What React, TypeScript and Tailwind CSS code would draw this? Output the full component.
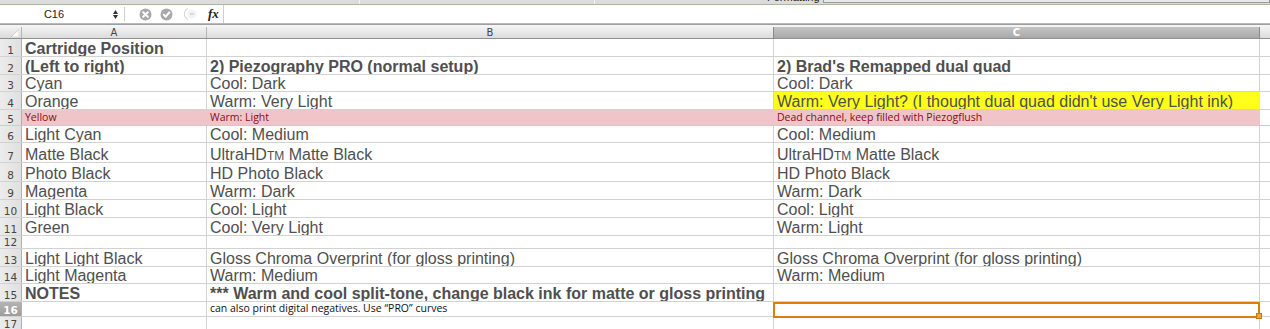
import React from "react";

type Cell = { t?: React.ReactNode; bold?: boolean; small?: "pink" | "black"; yellow?: boolean };
type Row = { n: number; h: number; cells: [Cell, Cell, Cell]; pink?: boolean };

const TM = (label: string) => (
  <span>
    UltraHD<span className="text-[12px] leading-[0px]">TM</span> {label}
  </span>
);

const rows: Row[] = [
  { n: 1, h: 18, cells: [{ t: "Cartridge Position", bold: true }, {}, {}] },
  { n: 2, h: 18, cells: [{ t: "(Left to right)", bold: true }, { t: "2) Piezography PRO (normal setup)", bold: true }, { t: "2) Brad's Remapped dual quad", bold: true }] },
  { n: 3, h: 17, cells: [{ t: "Cyan" }, { t: "Cool: Dark" }, { t: "Cool: Dark" }] },
  { n: 4, h: 18, cells: [{ t: "Orange" }, { t: "Warm: Very Light" }, { t: "Warm: Very Light? (I thought dual quad didn't use Very Light ink)", yellow: true }] },
  { n: 5, h: 16, pink: true, cells: [{ t: "Yellow", small: "pink" }, { t: "Warm: Light", small: "pink" }, { t: "Dead channel, keep filled with Piezogflush", small: "pink" }] },
  { n: 6, h: 17, cells: [{ t: "Light Cyan" }, { t: "Cool: Medium" }, { t: "Cool: Medium" }] },
  { n: 7, h: 20, cells: [{ t: "Matte Black" }, { t: TM("Matte Black") }, { t: TM("Matte Black") }] },
  { n: 8, h: 19, cells: [{ t: "Photo Black" }, { t: "HD Photo Black" }, { t: "HD Photo Black" }] },
  { n: 9, h: 18, cells: [{ t: "Magenta" }, { t: "Warm: Dark" }, { t: "Warm: Dark" }] },
  { n: 10, h: 18, cells: [{ t: "Light Black" }, { t: "Cool: Light" }, { t: "Cool: Light" }] },
  { n: 11, h: 18, cells: [{ t: "Green" }, { t: "Cool: Very Light" }, { t: "Warm: Light" }] },
  { n: 12, h: 13, cells: [{}, {}, {}] },
  { n: 13, h: 18, cells: [{ t: "Light Light Black" }, { t: "Gloss Chroma Overprint (for gloss printing)" }, { t: "Gloss Chroma Overprint (for gloss printing)" }] },
  { n: 14, h: 17, cells: [{ t: "Light Magenta" }, { t: "Warm: Medium" }, { t: "Warm: Medium" }] },
  { n: 15, h: 18, cells: [{ t: "NOTES", bold: true }, { t: "*** Warm and cool split-tone, change black ink for matte or gloss printing", bold: true }, {}] },
  { n: 16, h: 15, cells: [{}, { t: "can also print digital negatives. Use \u201cPRO\u201d curves", small: "black" }, {}] },
  { n: 17, h: 14, cells: [{}, {}, {}] },
];

const colW = ["w-[185px]", "w-[567px]", "w-[486px]"];

function CellView({ c, i, pink }: { c: Cell; i: number; pink?: boolean }) {
  const base = `${colW[i]} shrink-0 h-full flex items-end overflow-hidden whitespace-nowrap`;
  const bg = pink
    ? "bg-[#f0c5ca] border-r border-[#f0c5ca]"
    : c.yellow
    ? "bg-[#ffff1a] border-r border-[#ffff1a]"
    : "border-r border-[#d2d2d2]";
  let txt = "";
  if (c.small === "pink") txt = "font-['Open_Sans',sans-serif] text-[10.5px] leading-[14px] text-[#8a0a14] pl-[3px] pb-[1px]";
  else if (c.small === "black") txt = "font-['Open_Sans',sans-serif] text-[10.5px] leading-[13px] text-[#111] pl-[3px] pb-[1px]";
  else
    txt = `font-['Liberation_Sans',Arial,sans-serif] text-[16px] leading-[15px] text-[#4f4f4f] pl-[3px] ${c.bold ? "font-bold" : ""}`;
  return (
    <div className={`${base} ${bg} ${txt}`}>
      <span>{c.t}</span>
    </div>
  );
}

export default function App() {
  return (
    <div className="w-[1270px] h-[329px] overflow-hidden bg-white relative font-['DejaVu_Sans',sans-serif]">
      {/* top ribbon remnant */}
      <div className="h-[4px] bg-[#dcdcdc] relative overflow-hidden flex">
        <div className="w-[360px] h-full border-r border-[#f4f4f4]" />
        <div className="w-[235px] h-full border-r border-[#f4f4f4]" />
        <div className="w-[170px] h-full" />
        <div className="h-full text-[11px] leading-[11px] -mt-[8px] text-[#222] font-['Liberation_Sans',sans-serif] w-[58px] pl-[2px]">
          Formatting
        </div>
        <div className="flex-1 h-[3px] border border-t-0 border-[#9a9a9a] bg-[#e8e8e8]" />
      </div>
      <div className="h-[1px] bg-[#a8b89c]" />
      {/* formula bar */}
      <div className="h-[18px] flex items-center bg-white">
        <div className="w-[108px] text-center text-[11px] text-[#222] font-['Liberation_Sans',sans-serif]">C16</div>
        <div className="w-[14px] flex flex-col items-center justify-center gap-[1px]">
          <svg width="5" height="4" viewBox="0 0 5 4"><path d="M2.5 0 L5 4 L0 4 Z" fill="#333" /></svg>
          <svg width="5" height="4" viewBox="0 0 5 4"><path d="M0 0 L5 0 L2.5 4 Z" fill="#333" /></svg>
        </div>
        <div className="w-[1px] h-[14px] bg-[#cfcfcf] ml-[2px]" />
        <div className="w-[14px]" />
        <svg width="13" height="13" viewBox="0 0 13 13">
          <circle cx="6.5" cy="6.5" r="6" fill="#a9a9a9" />
          <path d="M4.2 4.2 L8.8 8.8 M8.8 4.2 L4.2 8.8" stroke="#fff" strokeWidth="2" strokeLinecap="round" />
        </svg>
        <div className="w-[8px]" />
        <svg width="13" height="13" viewBox="0 0 13 13">
          <circle cx="6.5" cy="6.5" r="6" fill="#a9a9a9" />
          <path d="M3.8 6.8 L5.7 8.7 L9.3 4.5" stroke="#fff" strokeWidth="2" fill="none" strokeLinecap="round" strokeLinejoin="round" />
        </svg>
        <div className="w-[11px]" />
        <svg width="14" height="14" viewBox="0 0 14 14">
          <path d="M4 1.5 A6 6 0 0 0 4 12.5" stroke="#d6d6d6" strokeWidth="1.2" fill="none" />
          <circle cx="8" cy="7" r="4.5" fill="#f2f2f2" />
          <path d="M6 7 H10" stroke="#cfcfcf" strokeWidth="1.5" />
        </svg>
        <div className="w-[10px]" />
        <span className="font-['Liberation_Serif',serif] italic text-[13px] text-[#222] font-bold">fx</span>
        <div className="w-[1px] h-[18px] bg-[#cfcfcf] ml-[4px]" />
        <div className="flex-1" />
      </div>
      <div className="h-[1px] bg-[#b9b9b9]" />
      <div className="h-[1px] bg-[#9e9e9e]" />
      <div className="h-[2px] bg-[#f4f4f4]" />
      {/* column header */}
      <div className="h-[12px] flex border-b border-[#8f8f8f] text-[10px] leading-[11px]">
        <div className="w-[22px] shrink-0 bg-gradient-to-b from-[#f2f2f2] to-[#dadada] border-r border-[#b5b5b5] relative">
          <svg className="absolute right-[2px] bottom-[1px]" width="8" height="8" viewBox="0 0 8 8">
            <path d="M8 0 L8 8 L0 8 Z" fill="#fafafa" stroke="#b0b0b0" strokeWidth="0.5" />
          </svg>
        </div>
        <div className="w-[185px] shrink-0 bg-gradient-to-b from-[#f2f2f2] to-[#dcdcdc] border-r border-[#b5b5b5] text-center text-[#444]">A</div>
        <div className="w-[567px] shrink-0 bg-gradient-to-b from-[#f2f2f2] to-[#dcdcdc] border-r border-[#8a8a8a] text-center text-[#444]">B</div>
        <div className="w-[486px] shrink-0 bg-gradient-to-b from-[#c4c4c4] to-[#a9a9a9] border-r border-[#8a8a8a] text-center text-white font-bold">C</div>
        <div className="flex-1 bg-gradient-to-b from-[#f2f2f2] to-[#dcdcdc]" />
      </div>
      {/* rows */}
      {rows.map((r) => (
        <div
          key={r.n}
          className={`flex border-b ${r.pink ? "border-[#e2c0c4]" : "border-[#d2d2d2]"}`}
          style={{ height: r.h }}
        >
          <div
            className={`w-[22px] shrink-0 h-full flex items-end justify-center text-[10.5px] leading-[12px] border-r border-[#b0b0b0] ${
              r.n === 16
                ? "bg-gradient-to-b from-[#b4b4b4] to-[#9c9c9c] text-white font-bold"
                : "bg-gradient-to-r from-[#ececec] to-[#e0e0e0] text-[#444]"
            }`}
          >
            {r.n}
          </div>
          {r.cells.map((c, i) => (
            <CellView key={i} c={c} i={i} pink={r.pink} />
          ))}
          <div className="flex-1" />
        </div>
      ))}
      {/* selection */}
      <div className="absolute left-[773px] top-[302px] w-[487px] h-[16px] border-2 border-[#e07b0c] pointer-events-none" />
      <div className="absolute left-[1256px] top-[313px] w-[6px] h-[6px] bg-[#f3a436] border border-[#d27408]" />
    </div>
  );
}
